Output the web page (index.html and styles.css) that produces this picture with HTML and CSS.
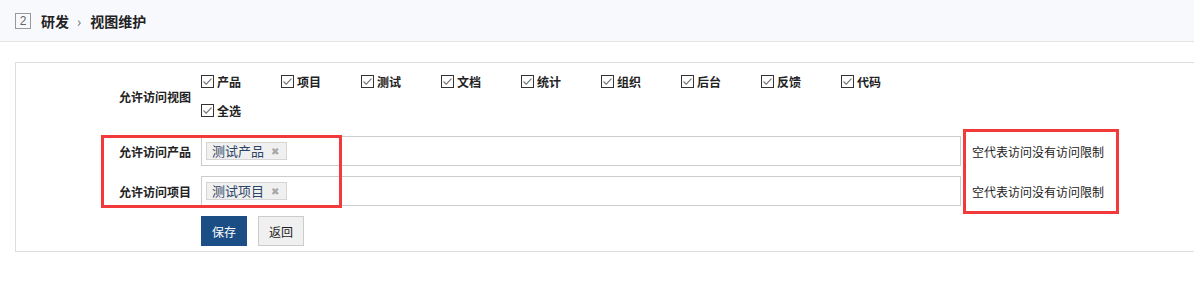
FILE: index.html
```html
<!DOCTYPE html>
<html lang="zh-CN">
<head>
<meta charset="utf-8">
<title>视图维护</title>
<link rel="stylesheet" href="styles.css">
</head>
<body>
<header class="topbar">
  <span class="num">2</span>
  <span class="crumb">研发</span>
  <span class="sep">›</span>
  <span class="crumb">视图维护</span>
</header>
<main class="panel">
  <div class="row first">
    <div class="label">允许访问视图</div>
    <div class="value checks">
      <label class="chk"><svg viewBox="0 0 13 13" width="13" height="13"><rect x="0.5" y="0.5" width="12" height="12" fill="#fff" stroke="#333"/><path d="M2.5 6.5 L5.2 9.2 L10.5 3.6" fill="none" stroke="#777" stroke-width="1.2"/></svg>产品</label>
      <label class="chk"><svg viewBox="0 0 13 13" width="13" height="13"><rect x="0.5" y="0.5" width="12" height="12" fill="#fff" stroke="#333"/><path d="M2.5 6.5 L5.2 9.2 L10.5 3.6" fill="none" stroke="#777" stroke-width="1.2"/></svg>项目</label>
      <label class="chk"><svg viewBox="0 0 13 13" width="13" height="13"><rect x="0.5" y="0.5" width="12" height="12" fill="#fff" stroke="#333"/><path d="M2.5 6.5 L5.2 9.2 L10.5 3.6" fill="none" stroke="#777" stroke-width="1.2"/></svg>测试</label>
      <label class="chk"><svg viewBox="0 0 13 13" width="13" height="13"><rect x="0.5" y="0.5" width="12" height="12" fill="#fff" stroke="#333"/><path d="M2.5 6.5 L5.2 9.2 L10.5 3.6" fill="none" stroke="#777" stroke-width="1.2"/></svg>文档</label>
      <label class="chk"><svg viewBox="0 0 13 13" width="13" height="13"><rect x="0.5" y="0.5" width="12" height="12" fill="#fff" stroke="#333"/><path d="M2.5 6.5 L5.2 9.2 L10.5 3.6" fill="none" stroke="#777" stroke-width="1.2"/></svg>统计</label>
      <label class="chk"><svg viewBox="0 0 13 13" width="13" height="13"><rect x="0.5" y="0.5" width="12" height="12" fill="#fff" stroke="#333"/><path d="M2.5 6.5 L5.2 9.2 L10.5 3.6" fill="none" stroke="#777" stroke-width="1.2"/></svg>组织</label>
      <label class="chk"><svg viewBox="0 0 13 13" width="13" height="13"><rect x="0.5" y="0.5" width="12" height="12" fill="#fff" stroke="#333"/><path d="M2.5 6.5 L5.2 9.2 L10.5 3.6" fill="none" stroke="#777" stroke-width="1.2"/></svg>后台</label>
      <label class="chk"><svg viewBox="0 0 13 13" width="13" height="13"><rect x="0.5" y="0.5" width="12" height="12" fill="#fff" stroke="#333"/><path d="M2.5 6.5 L5.2 9.2 L10.5 3.6" fill="none" stroke="#777" stroke-width="1.2"/></svg>反馈</label>
      <label class="chk"><svg viewBox="0 0 13 13" width="13" height="13"><rect x="0.5" y="0.5" width="12" height="12" fill="#fff" stroke="#333"/><path d="M2.5 6.5 L5.2 9.2 L10.5 3.6" fill="none" stroke="#777" stroke-width="1.2"/></svg>代码</label>
      <label class="chk"><svg viewBox="0 0 13 13" width="13" height="13"><rect x="0.5" y="0.5" width="12" height="12" fill="#fff" stroke="#333"/><path d="M2.5 6.5 L5.2 9.2 L10.5 3.6" fill="none" stroke="#777" stroke-width="1.2"/></svg>全选</label>
    </div>
    <div class="help"></div>
  </div>
  <div class="row">
    <div class="label">允许访问产品</div>
    <div class="value"><div class="select"><span class="tag">测试产品<span class="x">✖</span></span></div></div>
    <div class="help">空代表访问没有访问限制</div>
  </div>
  <div class="row">
    <div class="label">允许访问项目</div>
    <div class="value"><div class="select"><span class="tag">测试项目<span class="x">✖</span></span></div></div>
    <div class="help">空代表访问没有访问限制</div>
  </div>
  <div class="row">
    <div class="label"></div>
    <div class="value actions">
      <button class="btn primary">保存</button>
      <button class="btn">返回</button>
    </div>
    <div class="help"></div>
  </div>
  <div class="mark mark-left"></div>
  <div class="mark mark-right"></div>
</main>
</body>
</html>
```

FILE: styles.css
```css
html, body {
  margin: 0;
  padding: 0;
  background: #fff;
  overflow: hidden;
}
body {
  font-family: "Noto Sans CJK SC", "Liberation Sans", sans-serif;
  font-size: 12px;
  color: #333;
  width: 1194px;
  height: 297px;
}
.topbar {
  height: 42px;
  background: #f8f9fd;
  border-bottom: 1px solid #e5e5e5;
  display: flex;
  align-items: center;
  padding-left: 15px;
  box-sizing: border-box;
}
.num {
  width: 14px;
  height: 14px;
  border: 1px solid #999;
  color: #666;
  font-size: 12px;
  line-height: 14px;
  text-align: center;
  margin-right: 10px;
  font-family: "Liberation Sans", sans-serif;
}
.crumb {
  font-weight: bold;
  font-size: 14px;
  color: #222;
}
.sep {
  color: #666;
  margin: 0 9px 0 8px;
  font-size: 14px;
}
.panel {
  position: relative;
  margin: 20px 0 0 15px;
  width: 1180px;
  border: 1px solid #ddd;
  box-sizing: border-box;
}
.row {
  display: grid;
  grid-template-columns: 180px 765px auto;
  align-items: center;
  padding: 5px 0;
}
.row.first {
  padding: 4px 0 6px;
}
.label {
  text-align: right;
  padding-right: 5px;
  font-weight: bold;
  color: #222;
}
.value {
  padding-left: 5px;
}
.checks {
  display: flex;
  flex-wrap: wrap;
}
.chk {
  width: 80px;
  height: 29px;
  display: flex;
  align-items: center;
  font-weight: bold;
  color: #222;
}
.chk svg {
  margin-right: 3px;
  flex: none;
}
.select {
  height: 30px;
  border: 1px solid #ccc;
  box-sizing: border-box;
  display: flex;
  align-items: center;
  padding-left: 4px;
}
.tag {
  height: 18px;
  box-sizing: border-box;
  background: #f0f0f0;
  border: 1px solid #d5d5d5;
  color: #2d4466;
  font-size: 13px;
  line-height: 16px;
  padding: 0 7px 0 5px;
  display: flex;
  align-items: center;
  white-space: nowrap;
}
.x {
  color: #a8a8a8;
  font-size: 10px;
  margin-left: 7px;
}
.help {
  padding-left: 11px;
  font-size: 12px;
  color: #222;
}
.actions {
  display: flex;
  gap: 11px;
}
.btn {
  height: 30px;
  padding: 0 10px;
  font-family: inherit;
  font-size: 12px;
  border: 1px solid #ccc;
  background: #f0f0f0;
  color: #222;
  border-radius: 0;
}
.btn.primary {
  background: #1b4e85;
  border-color: #1b4e85;
  color: #fff;
}
.mark {
  position: absolute;
  border: 3px solid #f23a3a;
  pointer-events: none;
  box-sizing: border-box;
}
.mark-left {
  left: 85px;
  top: 72px;
  width: 241px;
  height: 73px;
}
.mark-right {
  left: 947px;
  top: 66px;
  width: 156px;
  height: 85px;
}
```
